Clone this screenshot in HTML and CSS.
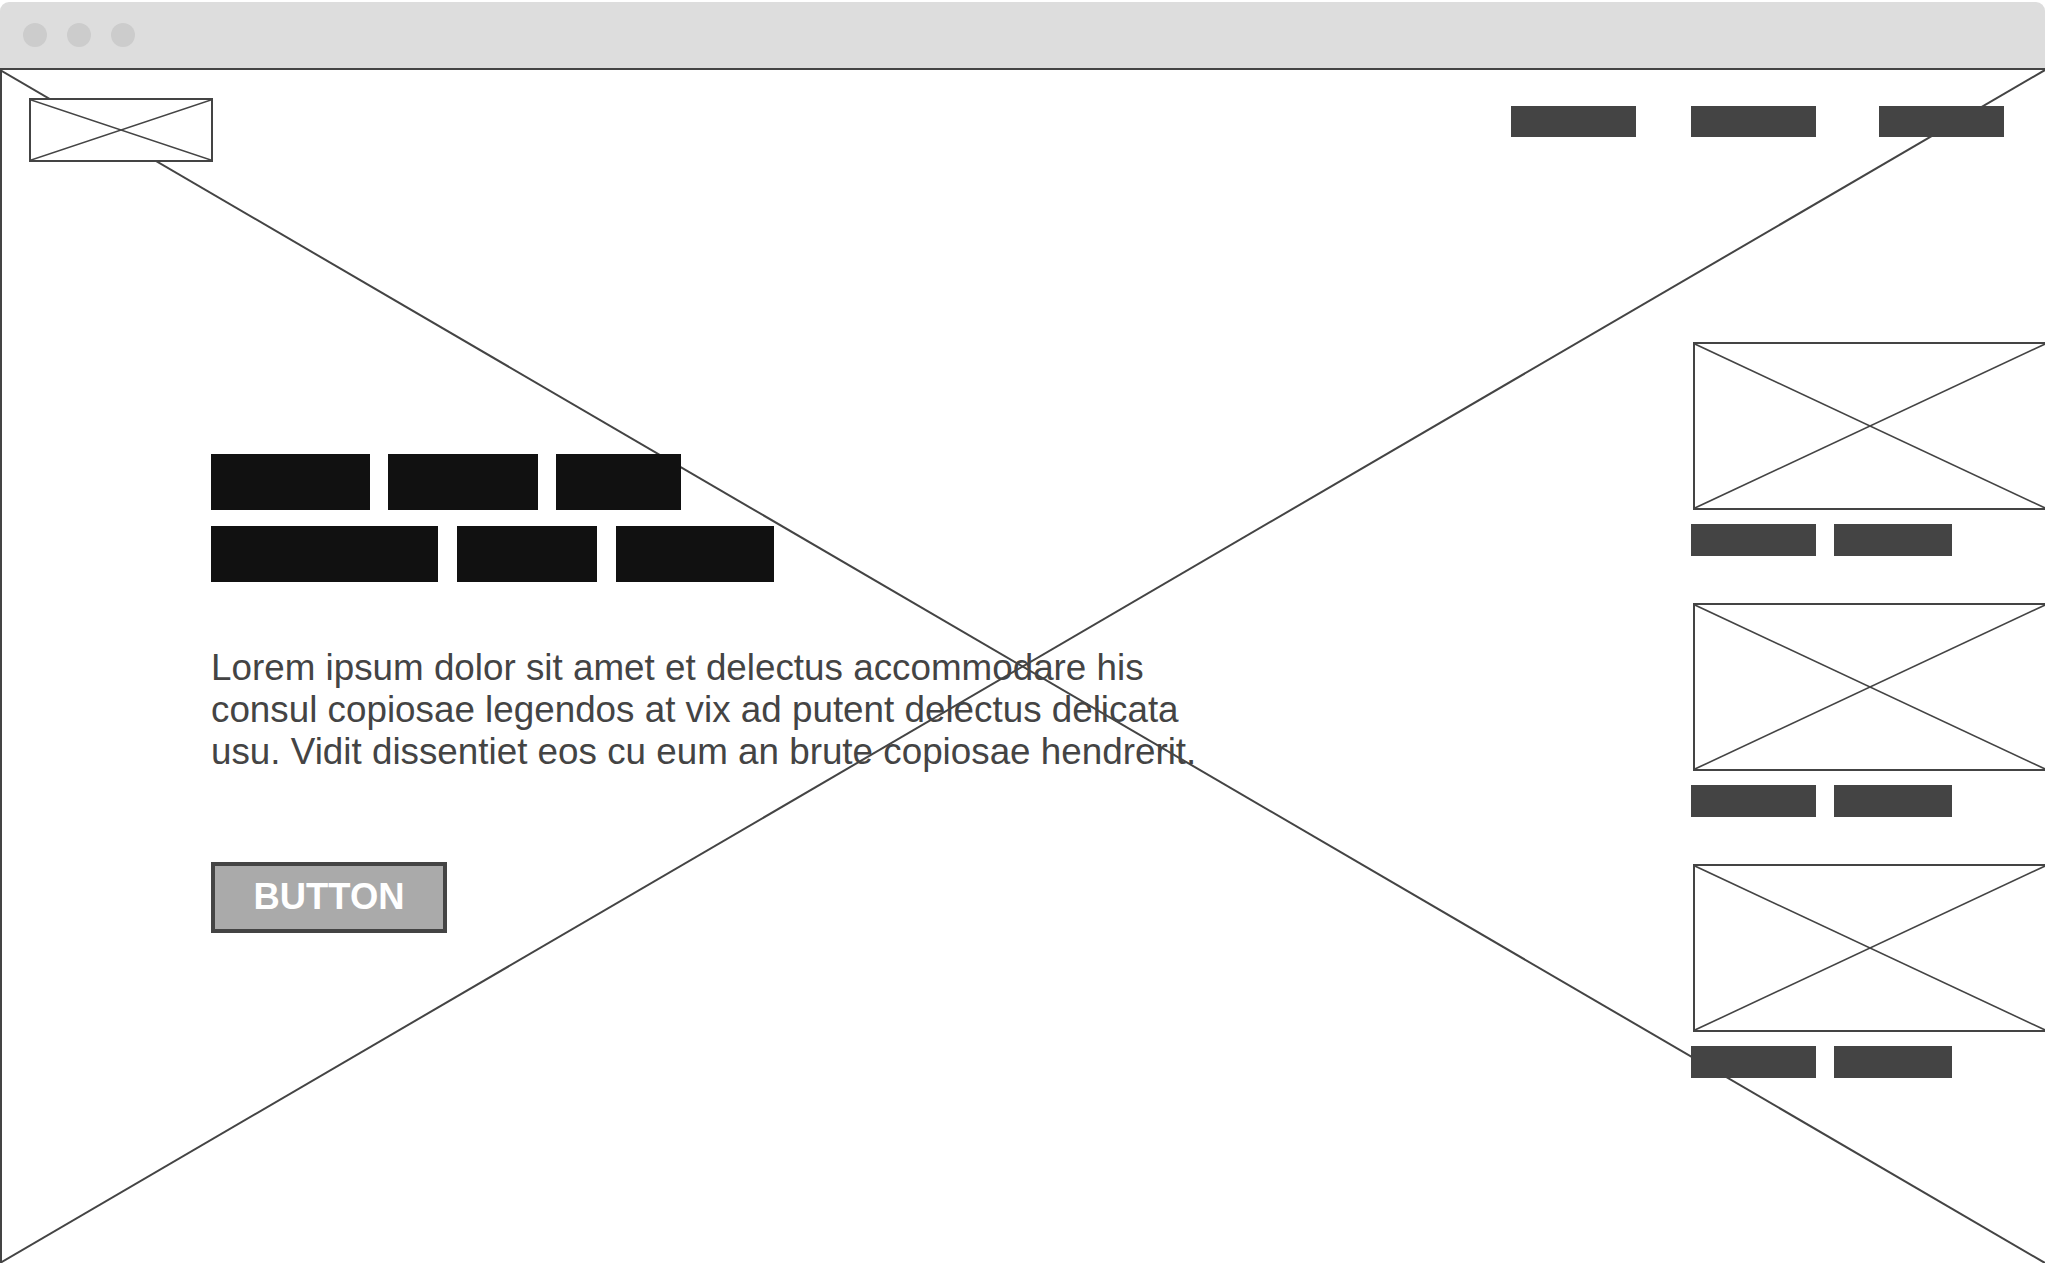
FILE: index.html
```html
<!DOCTYPE html>
<html lang="en">
<head>
<meta charset="utf-8">
<title>Wireframe</title>
<link rel="stylesheet" href="styles.css">
</head>
<body>
<div class="window">
  <div class="titlebar">
    <span class="dot"></span><span class="dot"></span><span class="dot"></span>
  </div>
  <div class="viewport">
    <svg class="bg-cross" viewBox="0 0 100 100" preserveAspectRatio="none" aria-hidden="true">
      <line x1="0" y1="0" x2="100" y2="100" vector-effect="non-scaling-stroke"/>
      <line x1="100" y1="0" x2="0" y2="100" vector-effect="non-scaling-stroke"/>
    </svg>
    <header class="header">
      <div class="placeholder logo">
        <svg viewBox="0 0 100 100" preserveAspectRatio="none" aria-hidden="true">
          <line x1="0" y1="0" x2="100" y2="100" vector-effect="non-scaling-stroke"/>
          <line x1="100" y1="0" x2="0" y2="100" vector-effect="non-scaling-stroke"/>
        </svg>
      </div>
      <nav class="nav">
        <span class="bar nav-bar"></span>
        <span class="bar nav-bar"></span>
        <span class="bar nav-bar nav-bar-last"></span>
      </nav>
    </header>
    <main class="main">
      <section class="hero">
        <div class="headline">
          <div class="headline-row">
            <span class="word" style="width:159px"></span>
            <span class="word" style="width:150px"></span>
            <span class="word" style="width:125px"></span>
          </div>
          <div class="headline-row headline-row-wide">
            <span class="word" style="width:227px"></span>
            <span class="word" style="width:140px"></span>
            <span class="word" style="width:158px"></span>
          </div>
        </div>
        <p class="lead">Lorem ipsum dolor sit amet et delectus accommodare his consul copiosae legendos at vix ad putent delectus delicata usu. Vidit dissentiet eos cu eum an brute copiosae hendrerit.</p>
        <button class="button" type="button">BUTTON</button>
      </section>
      <aside class="sidebar">
        <div class="card">
          <div class="placeholder thumb">
            <svg viewBox="0 0 100 100" preserveAspectRatio="none" aria-hidden="true">
              <line x1="0" y1="0" x2="100" y2="100" vector-effect="non-scaling-stroke"/>
              <line x1="100" y1="0" x2="0" y2="100" vector-effect="non-scaling-stroke"/>
            </svg>
          </div>
          <div class="card-bars"><span class="bar card-bar-a"></span><span class="bar card-bar-b"></span></div>
        </div>
        <div class="card">
          <div class="placeholder thumb">
            <svg viewBox="0 0 100 100" preserveAspectRatio="none" aria-hidden="true">
              <line x1="0" y1="0" x2="100" y2="100" vector-effect="non-scaling-stroke"/>
              <line x1="100" y1="0" x2="0" y2="100" vector-effect="non-scaling-stroke"/>
            </svg>
          </div>
          <div class="card-bars"><span class="bar card-bar-a"></span><span class="bar card-bar-b"></span></div>
        </div>
        <div class="card">
          <div class="placeholder thumb">
            <svg viewBox="0 0 100 100" preserveAspectRatio="none" aria-hidden="true">
              <line x1="0" y1="0" x2="100" y2="100" vector-effect="non-scaling-stroke"/>
              <line x1="100" y1="0" x2="0" y2="100" vector-effect="non-scaling-stroke"/>
            </svg>
          </div>
          <div class="card-bars"><span class="bar card-bar-a"></span><span class="bar card-bar-b"></span></div>
        </div>
      </aside>
    </main>
  </div>
</div>
</body>
</html>
```
FILE: styles.css
```css
* { box-sizing: border-box; }

html, body {
  margin: 0;
  padding: 0;
  height: 100%;
  background: #ffffff;
  font-family: "Liberation Sans", Arial, sans-serif;
  overflow: hidden;
}

.window {
  display: flex;
  flex-direction: column;
  height: 100vh;
  padding-top: 2px;
}

.titlebar {
  flex: 0 0 auto;
  height: 68px;
  background: #dddddd;
  border-radius: 9px 9px 0 0;
  border-bottom: 2px solid #444444;
  display: flex;
  align-items: center;
  gap: 20px;
  padding-left: 23px;
}

.dot {
  width: 24px;
  height: 24px;
  border-radius: 50%;
  background: #cccccc;
}

.viewport {
  position: relative;
  flex: 1 1 auto;
  border-left: 2px solid #444444;
  overflow: hidden;
}

.bg-cross {
  position: absolute;
  top: 0;
  left: -2px;
  width: calc(100% + 2px);
  height: 100%;
  z-index: 0;
}

.bg-cross line,
.placeholder line {
  stroke: #444444;
  stroke-width: 2;
}

.placeholder line { stroke-width: 1.6; }

.header,
.main {
  position: relative;
  z-index: 1;
}

.header {
  display: flex;
  justify-content: space-between;
  align-items: flex-start;
  padding: 28px 41px 0 27px;
}

.placeholder {
  background: #ffffff;
  border: 2px solid #444444;
}

.placeholder svg {
  display: block;
  width: 100%;
  height: 100%;
}

.logo {
  width: 184px;
  height: 64px;
}

.nav {
  display: flex;
  gap: 55px;
  margin-top: 8px;
}

.bar {
  display: block;
  background: #444444;
}

.nav-bar {
  width: 125px;
  height: 31px;
}

.nav-bar-last { margin-left: 8px; }

.main {
  display: grid;
  grid-template-columns: 1fr 356px;
  margin-right: -2px;
  align-items: start;
}

.hero {
  padding: 292px 0 0 209px;
}

.headline {
  display: flex;
  flex-direction: column;
  gap: 16px;
}

.headline-row {
  display: flex;
  gap: 18px;
}

.headline-row-wide { gap: 19px; }

.word {
  display: block;
  height: 56px;
  background: #111111;
}

.lead {
  width: 1010px;
  margin: 65px 0 0 0;
  font-size: 36.8px;
  line-height: 42px;
  color: #444444;
}

.button {
  display: block;
  margin-top: 89px;
  width: 236px;
  height: 71px;
  padding: 0;
  border: 4px solid #444444;
  border-radius: 0;
  background: #aaaaaa;
  color: #ffffff;
  font-family: "Liberation Sans", Arial, sans-serif;
  font-weight: bold;
  font-size: 36.4px;
  line-height: 1;
}

.sidebar {
  display: flex;
  flex-direction: column;
  gap: 47px;
  padding-top: 180px;
}

.thumb {
  margin-left: 2px;
  width: 354px;
  height: 168px;
}

.card-bars {
  display: flex;
  gap: 18px;
  margin-top: 14px;
}

.card-bar-a { width: 125px; height: 32px; }
.card-bar-b { width: 118px; height: 32px; }
```
